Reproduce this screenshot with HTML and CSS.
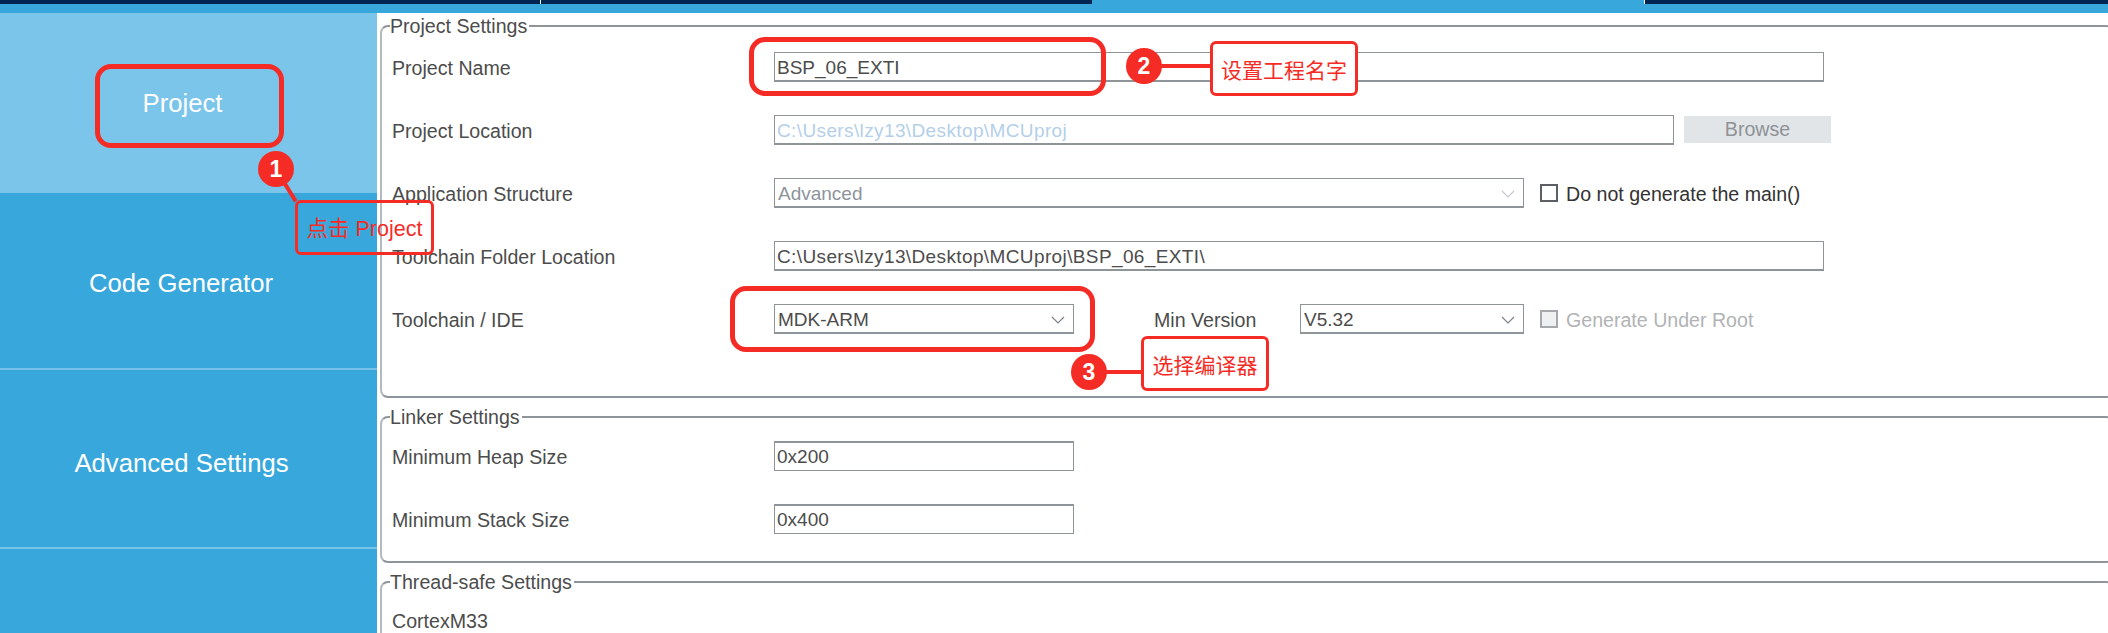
FILE: index.html
```html
<!DOCTYPE html>
<html lang="en">
<head>
<meta charset="utf-8">
<title>Project Manager</title>
<link rel="stylesheet" href="styles.css">
</head>
<body>
<div class="page">
  <div class="topbar">
    <div class="tab tab-a"></div>
    <div class="tab tab-b"></div>
    <div class="tab tab-c"></div>
    <div class="tab tab-d"></div>
  </div>
  <div class="main">
    <nav class="sidebar">
      <div class="side side-project">Project</div>
      <div class="side side-code">Code Generator</div>
      <div class="side side-adv">Advanced Settings</div>
      <div class="side side-rest"></div>
    </nav>
    <div class="content">
      <fieldset class="group group-project">
        <legend>Project Settings</legend>
        <div class="row">
          <span class="label">Project Name</span>
          <div class="field w-full"><span class="val">BSP_06_EXTI</span></div>
        </div>
        <div class="row">
          <span class="label">Project Location</span>
          <div class="field w-loc"><span class="val path muted-blue">C:\Users\lzy13\Desktop\MCUproj</span></div>
          <div class="browse">Browse</div>
        </div>
        <div class="row">
          <span class="label">Application Structure</span>
          <div class="field w-app select"><span class="val muted-grey">Advanced</span>
            <svg class="chev" viewBox="0 0 14 8"><path class="chev-light" d="M1 1l6 6 6-6"/></svg>
          </div>
          <span class="check"></span>
          <span class="check-label">Do not generate the main()</span>
        </div>
        <div class="row">
          <span class="label">Toolchain Folder Location</span>
          <div class="field w-full"><span class="val path">C:\Users\lzy13\Desktop\MCUproj\BSP_06_EXTI\</span></div>
        </div>
        <div class="row">
          <span class="label">Toolchain / IDE</span>
          <div class="field w-short select"><span class="val">MDK-ARM</span>
            <svg class="chev" viewBox="0 0 14 8"><path d="M1 1l6 6 6-6"/></svg>
          </div>
          <span class="label label-min">Min Version</span>
          <div class="field w-ver select"><span class="val">V5.32</span>
            <svg class="chev" viewBox="0 0 14 8"><path d="M1 1l6 6 6-6"/></svg>
          </div>
          <span class="check check-off"></span>
          <span class="check-label off">Generate Under Root</span>
        </div>
      </fieldset>
      <fieldset class="group group-linker">
        <legend>Linker Settings</legend>
        <div class="row">
          <span class="label">Minimum Heap Size</span>
          <div class="field w-short thick-top"><span class="val">0x200</span></div>
        </div>
        <div class="row">
          <span class="label">Minimum Stack Size</span>
          <div class="field w-short thick-top"><span class="val">0x400</span></div>
        </div>
      </fieldset>
      <fieldset class="group group-thread">
        <legend>Thread-safe Settings</legend>
        <span class="label">CortexM33</span>
      </fieldset>
    </div>
  </div>
  <div class="mark mark-project"></div>
  <div class="mark mark-name"></div>
  <div class="mark mark-ide"></div>
  <div class="link link-1"></div>
  <div class="link link-2"></div>
  <div class="link link-3"></div>
  <div class="badge badge-1">1</div>
  <div class="badge badge-2">2</div>
  <div class="badge badge-3">3</div>
  <div class="note note-1">点击 Project</div>
  <div class="note note-2">设置工程名字</div>
  <div class="note note-3">选择编译器</div>
</div>
</body>
</html>
```
FILE: styles.css
```css
* { box-sizing: border-box; }
html, body { margin: 0; padding: 0; background: #fff; }
.page {
  position: relative;
  width: 2108px;
  height: 633px;
  overflow: hidden;
  font-family: "Liberation Sans", Arial, sans-serif;
  color: #4c4c4c;
}
.topbar {
  display: flex;
  height: 13px;
  background: #38a8dc;
  align-items: flex-start;
}
.tab { height: 4px; }
.tab-a { width: 541px; background: #022552; border-right: 1px solid #fff; }
.tab-b { width: 551px; background: #022552; }
.tab-c { width: 553px; border-right: 1px solid #fff; }
.tab-d { flex: 1; background: #022552; }
.main { display: flex; height: 620px; }
.sidebar {
  width: 377px;
  flex: none;
  background: #38a8dc;
  color: #fff;
  font-size: 25.7px;
  display: flex;
  flex-direction: column;
}
.side {
  display: flex;
  align-items: center;
  justify-content: center;
}
.side-project { height: 180px; background: #7ac5e9; padding: 0 12px 0 0; }
.side-code { height: 175px; padding: 5px 15px 0 0; }
.side-adv {
  height: 181px;
  padding: 10px 14px 0 0;
  border-top: 2px solid #74c2e8;
  border-bottom: 2px solid #74c2e8;
}
.side-rest { flex: 1; }
.content { flex: 1; padding: 3px 0 0 3px; min-width: 0; }
.group {
  margin: 0 -6px 0 0;
  padding: 0 0 0 10px;
  min-width: 0;
  border: 2px solid #8f9499;
  border-left-color: #b5b9bc;
  border-radius: 8px;
}
.group legend {
  padding: 0 2px 0 0;
  margin-left: -2px;
  font-size: 19.6px;
  line-height: 20px;
}
.group-project { height: 382px; }
.group-linker { height: 156px; margin-top: 9px; }
.group-thread { height: 80px; margin-top: 9px; }
.group-thread .label { display: block; margin-top: 13px; }
.row {
  display: flex;
  align-items: flex-start;
  height: 63px;
  padding-top: 16px;
}
.group-linker .row { padding-top: 14px; }
.label {
  font-size: 19.6px;
  line-height: 32px;
  width: 382px;
  flex: none;
}
.label-min { width: 146px; margin-left: 80px; }
.field {
  height: 30px;
  flex: none;
  display: flex;
  align-items: center;
  position: relative;
  border: 1px solid #8f9499;
  border-bottom-width: 2px;
  background: #fff;
  font-size: 19px;
  padding: 2px 0 0 2px;
}
.select { padding-left: 3px; }
.thick-top { border-top-width: 2px; border-bottom-width: 1px; padding-top: 1px; }
.w-full { width: 1050px; }
.w-loc { width: 900px; }
.w-app { width: 750px; }
.w-short { width: 300px; }
.w-ver { width: 224px; }
.val { white-space: nowrap; }
.path { letter-spacing: 0.38px; }
.muted-blue { color: #b4cfe9; }
.muted-grey { color: #8d949b; }
.browse {
  width: 147px;
  height: 27px;
  margin: 1px 0 0 10px;
  background: #e2e5e8;
  color: #8d9296;
  font-size: 19.6px;
  display: flex;
  align-items: center;
  justify-content: center;
}
.chev {
  position: absolute;
  right: 8px;
  top: 11px;
  width: 14px;
  height: 8px;
  fill: none;
  stroke: #7d8389;
  stroke-width: 1.2;
}
.chev .chev-light { stroke: #c5c8cb; }
.check {
  width: 18px;
  height: 18px;
  margin: 6px 0 0 16px;
  border: 2px solid #5c5f63;
  flex: none;
}
.check-off { background: #eef0f2; border-color: #a5a9ad; }
.check-label {
  margin-left: 8px;
  font-size: 19.6px;
  line-height: 32px;
  color: #333;
  white-space: nowrap;
}
.check-label.off { color: #b1b3b5; }

/* annotations layered over the form */
.mark {
  position: absolute;
  border: 5px solid #f52c26;
  border-radius: 16px;
}
.mark-project { left: 95px; top: 64px; width: 189px; height: 84px; }
.mark-name { left: 749px; top: 37px; width: 357px; height: 59px; }
.mark-ide { left: 730px; top: 286px; width: 365px; height: 66px; }
.badge {
  position: absolute;
  width: 36px;
  height: 36px;
  border-radius: 50%;
  background: #f52c26;
  color: #fff;
  font: bold 23px/36px "Liberation Sans", Arial, sans-serif;
  text-align: center;
}
.badge-1 { left: 258px; top: 151px; }
.badge-2 { left: 1126px; top: 48px; }
.badge-3 { left: 1071px; top: 354px; }
.link { position: absolute; background: #f52c26; height: 4px; }
.link-1 { left: 279px; top: 190px; width: 22px; transform: rotate(58deg); }
.link-2 { left: 1160px; top: 64px; width: 52px; }
.link-3 { left: 1105px; top: 370px; width: 38px; }
.note {
  position: absolute;
  border: 3px solid #f52c26;
  border-radius: 6px;
  color: #f52c26;
  font-family: "Liberation Sans", "Noto Sans CJK SC", sans-serif;
  font-size: 21px;
  white-space: nowrap;
  display: flex;
  align-items: center;
  justify-content: center;
}
.note-1 { left: 295px; top: 200px; width: 139px; height: 55px; font-size: 21.5px; padding-bottom: 2px; }
.note-2 { left: 1210px; top: 41px; width: 148px; height: 55px; background: #fff; }
.note-3 { left: 1141px; top: 336px; width: 128px; height: 55px; background: #fff; }
```
